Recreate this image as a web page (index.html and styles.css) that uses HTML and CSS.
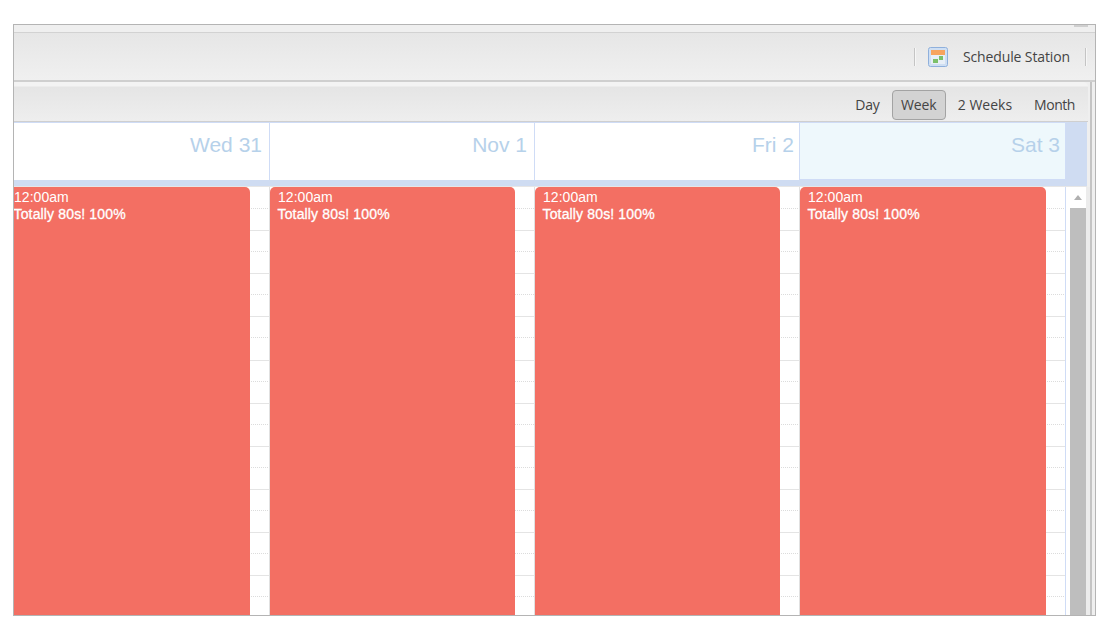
FILE: index.html
```html
<!DOCTYPE html>
<html lang="en">
<head>
<meta charset="utf-8">
<title>Schedule Station</title>
<link rel="stylesheet" href="styles.css">
</head>
<body>
<div class="frame">
  <div class="topstrip"><span class="tab"></span></div>
  <div class="toolbar">
    <span class="sep"></span>
    <svg class="logo" width="20" height="20" viewBox="0 0 20 20">
      <rect x="0.5" y="0.5" width="19" height="19" rx="2" fill="#cfdff3" stroke="#8fb0dc"/>
      <rect x="3" y="3" width="14" height="5" fill="#f7a45e"/>
      <rect x="3" y="8" width="14" height="9" fill="#e8eff7"/>
      <rect x="5" y="12" width="5" height="4" fill="#7cc06a"/>
      <rect x="11" y="9" width="4" height="4" fill="#7cc06a"/>
    </svg>
    <span class="station">Schedule Station</span>
    <span class="sep"></span>
  </div>
  <div class="viewbar">
    <span class="view day-view">Day</span>
    <span class="view active">Week</span>
    <span class="view weeks-view">2 Weeks</span>
    <span class="view month-view">Month</span>
  </div>
  <div class="header">
    <div class="day">Wed 31</div>
    <div class="day">Nov 1</div>
    <div class="day narrow">Fri 2</div>
    <div class="day today">Sat 3</div>
  </div>
  <div class="headbar"></div>
  <div class="body">
    <div class="grid">
      <div class="lines">
        <div class="row"></div><div class="row"></div><div class="row"></div>
        <div class="row"></div><div class="row"></div><div class="row"></div>
        <div class="row"></div><div class="row"></div><div class="row"></div>
        <div class="row"></div>
      </div>
      <div class="cell c1"><div class="event clipped"><div>12:00am</div><div class="title">Totally 80s! 100%</div></div></div>
      <div class="cell c2"><div class="event"><div>12:00am</div><div class="title">Totally 80s! 100%</div></div></div>
      <div class="cell c3"><div class="event"><div>12:00am</div><div class="title">Totally 80s! 100%</div></div></div>
      <div class="cell c4"><div class="event wide"><div>12:00am</div><div class="title">Totally 80s! 100%</div></div></div>
    </div>
    <div class="scrollbar">
      <div class="arrow"></div>
      <div class="thumb"></div>
    </div>
  </div>
</div>
</body>
</html>
```
FILE: styles.css
```css
html, body {
  margin: 0;
  padding: 0;
  background: #fff;
  overflow: hidden;
}
body {
  height: 623px;
  padding: 24px 0 0 13px;
  box-sizing: border-box;
}
.frame {
  width: 1083px;
  height: 592px;
  box-sizing: border-box;
  border: 1px solid #b4b4b4;
  display: flex;
  flex-direction: column;
  overflow: hidden;
  background: linear-gradient(90deg, #efefef 0, #efefef 1076px, #c4c4c4 1076px, #c4c4c4 1078px, #efefef 1078px);
}
.topstrip {
  height: 8px;
  box-sizing: border-box;
  background: #efefef;
  border-bottom: 1px solid #d2d2d2;
  display: flex;
  justify-content: flex-end;
  padding-right: 7px;
  flex: none;
}
.tab {
  width: 14px;
  height: 2px;
  background: #cfcfcf;
}
.toolbar {
  height: 49px;
  flex: none;
  box-sizing: border-box;
  border-bottom: 2px solid #cfcfcf;
  background: linear-gradient(#e6e6e6, #f0f0f0);
  display: flex;
  align-items: center;
  justify-content: flex-end;
  padding: 0 8px 0 0;
  font: 14px "Open Sans", sans-serif;
  color: #444;
}
.sep {
  width: 1px;
  height: 18px;
  background: #c4c4c4;
  border-right: 1px solid #f6f6f6;
}
.logo {
  margin-left: 12px;
}
.station {
  margin: 0 15px;
  letter-spacing: -0.12px;
}
.viewbar {
  height: 40px;
  width: 1074px;
  flex: none;
  box-sizing: border-box;
  padding: 7px 2px 0 0;
  border-top-right-radius: 5px;
  border-bottom: 1px solid #cfcfcf;
  background: linear-gradient(#f3f3f3 0, #f3f3f3 4px, #e5e5e5 5px, #eeeeee 100%);
  display: flex;
  justify-content: flex-end;
  align-items: center;
  font: 14px "Open Sans", sans-serif;
  color: #444;
  letter-spacing: -0.15px;
}
.view {
  height: 30px;
  line-height: 30px;
  padding: 0 11px;
  box-sizing: border-box;
}
.day-view {
  padding-right: 12px;
}
.weeks-view {
  padding-left: 12px;
  padding-right: 11px;
  letter-spacing: 0;
}
.month-view {
  letter-spacing: -0.45px;
}
.view.active {
  width: 54px;
  padding: 0;
  text-align: center;
  line-height: 28px;
  background: #d3d3d3;
  border: 1px solid #a3a3a3;
  border-radius: 4px;
}
.header {
  height: 58px;
  width: 1073px;
  flex: none;
  display: grid;
  grid-template-columns: 256px 265px 265px 266px;
  background: #cfdcf2;
  padding-right: 21px;
  box-sizing: border-box;
  font: 21px "Liberation Sans", Arial, sans-serif;
  color: #b6d1ea;
}
.day {
  box-sizing: border-box;
  background: #fff;
  border-top: 1px solid #cfdcf6;
  border-right: 1px solid #cfdcf6;
  text-align: right;
  padding: 10px 7px 0 0;
}
.day.narrow {
  padding-right: 5px;
}
.day.today {
  background: #eef8fc;
  border-bottom: 1px solid #cfdcf6;
  padding-right: 5px;
}
.headbar {
  height: 7px;
  width: 1073px;
  box-sizing: border-box;
  flex: none;
  background: #cfdcf2;
  border-bottom: 1px solid #e6e6e6;
}
.body {
  flex: 1;
  min-height: 0;
  width: 1076px;
  display: flex;
}
.grid {
  display: grid;
  grid-template-columns: 256px 265px 265px 266px;
  grid-template-rows: 1fr;
  width: 1052px;
  flex: none;
  background: #fff;
  overflow: hidden;
}
.lines {
  grid-area: 1 / 1 / 2 / 5;
  padding-top: 1px;
}
.row {
  height: 43.125px;
  box-sizing: border-box;
  border-bottom: 1px solid #e4e4e4;
}
.row::before {
  content: "";
  display: block;
  height: 21px;
  box-sizing: border-box;
  border-bottom: 1px dotted #dcdcdc;
}
.cell {
  box-sizing: border-box;
  grid-row: 1;
  border-right: 1px solid #e0e0e0;
  min-height: 0;
}
.c1 { grid-column: 1; }
.c2 { grid-column: 2; }
.c3 { grid-column: 3; }
.c4 { grid-column: 4; border-right-color: #cfdcf6; }
.event {
  box-sizing: border-box;
  height: 440px;
  width: 245px;
  padding: 2px 0 0 8px;
  background: #f36f63;
  border-radius: 5px 5px 0 0;
  color: #fff;
  font: 14px/17px "Liberation Sans", Arial, sans-serif;
  letter-spacing: 0.05px;
}
.event.wide {
  width: 246px;
}
.event.clipped {
  width: 236px;
  padding-left: 0;
  border-top-left-radius: 0;
}
.title {
  -webkit-text-stroke: 0.3px #fff;
  letter-spacing: 0.15px;
  margin-left: -0.5px;
}
.scrollbar {
  width: 24px;
  flex: none;
  display: flex;
  flex-direction: column;
  align-items: flex-start;
  padding-left: 4px;
  box-sizing: border-box;
  background: linear-gradient(90deg, #fff 0, #fff 20px, #ececec 20px);
}
.arrow {
  width: 0;
  height: 0;
  margin: 8px 0 0 4px;
  border-left: 4px solid #0000;
  border-right: 4px solid #0000;
  border-bottom: 5px solid #b0b0b0;
}
.thumb {
  width: 16px;
  flex: 1;
  margin-top: 8px;
  background: #bebebe;
}
```
